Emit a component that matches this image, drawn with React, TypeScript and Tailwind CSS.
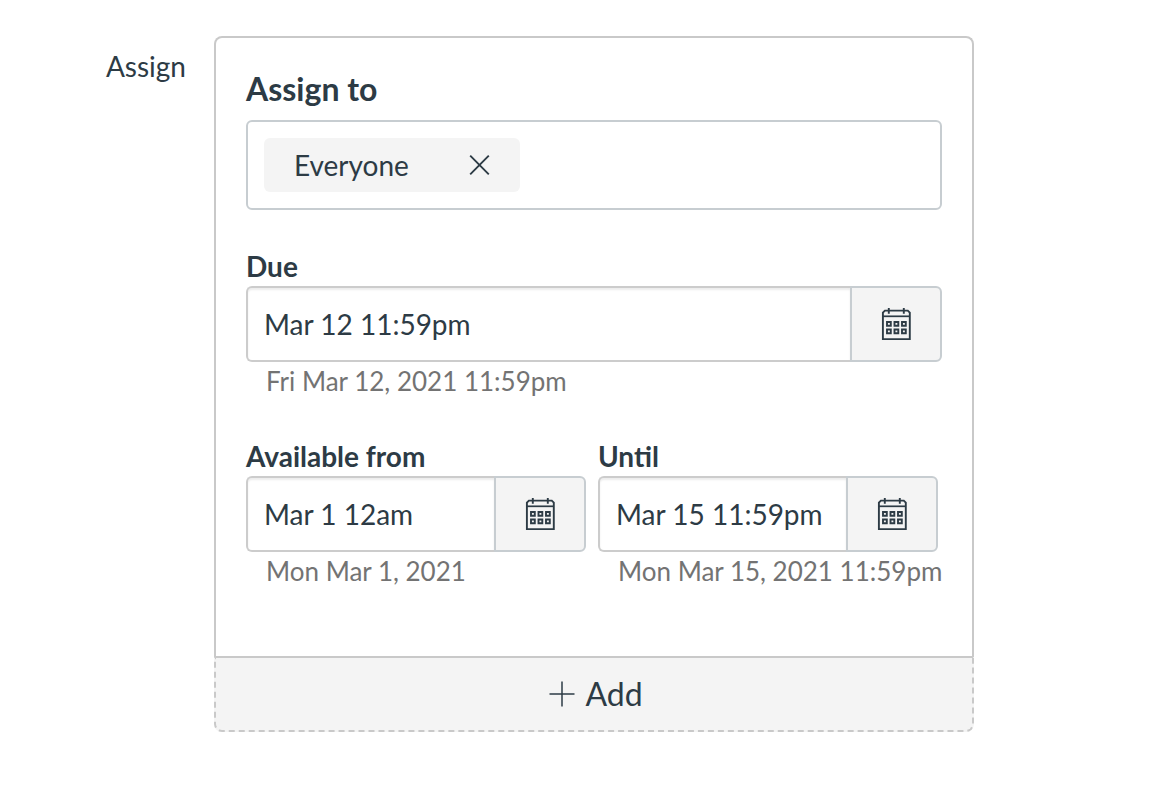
import { useState } from 'react';

function CalendarIcon() {
  return (
    <svg width="30" height="32" viewBox="0 0 30 32" fill="none" stroke="#2D3B45" strokeWidth="1.9" aria-hidden="true">
      <path d="M1.9 31.1V4.6L3.9 2.6H26.8L28.8 4.6V31.1Z" />
      <path d="M1.9 8.3H28.8" strokeWidth="1.7" />
      <path d="M7.8 0V5.8M22.8 0V5.8" />
      <path d="M6 14H9.8V17.8H6ZM13.5 14H17.3V17.8H13.5ZM21 14H24.8V17.8H21Z" />
      <path d="M6 21.5H9.8V25.3H6ZM13.5 21.5H17.3V25.3H13.5ZM21 21.5H24.8V25.3H21Z" />
    </svg>
  );
}

type DateFieldProps = {
  id: string;
  label: string;
  initialValue: string;
  hint: string;
};

function DateField({ id, label, initialValue, hint }: DateFieldProps) {
  const [value, setValue] = useState(initialValue);
  return (
    <div className="min-w-0">
      <label htmlFor={id} className="block pb-0.5 text-[28px] leading-9 font-bold">
        {label}
      </label>
      <div className="flex h-[76px]">
        <input
          id={id}
          type="text"
          value={value}
          onChange={e => setValue(e.target.value)}
          aria-describedby={`${id}-hint`}
          className="min-w-0 flex-1 rounded-l-md border-2 border-r-0 border-[#cccccc] bg-white pl-4 text-[28px] shadow-[inset_0_2px_2px_rgba(0,0,0,0.08)] outline-none"
        />
        <button
          type="button"
          aria-label={`${label} calendar`}
          className="flex w-[92px] shrink-0 items-center justify-center rounded-r-md border-2 border-[#c7cdd1] bg-[#f4f4f4]"
        >
          <CalendarIcon />
        </button>
      </div>
      <p id={`${id}-hint`} className="pl-5 text-[26px] leading-[38px] whitespace-nowrap text-[#737373]">
        {hint}
      </p>
    </div>
  );
}

export default function App() {
  return (
    <main className="flex bg-white pt-9 pb-16 font-['Lato',sans-serif] text-[#2D3B45]">
      <div className="w-[214px] shrink-0 pt-3 pr-7 text-right text-[28px] leading-9">Assign</div>
      <div className="mr-[182px] min-w-0 flex-1">
        <section className="rounded-t-lg border-2 border-b-0 border-[#c9c9c9] px-[30px] pt-[30px] pb-[66px]">
          <h2 className="pb-[10px] text-[32px] leading-[42px] font-bold">Assign to</h2>
          <div className="flex rounded-md border-2 border-[#c7cdd1] p-4">
            <div className="flex h-[54px] w-64 items-center justify-between rounded-md bg-[#f4f4f4] px-[30px] text-[28px]">
              <span>Everyone</span>
              <button type="button" aria-label="Remove Everyone">
                <svg width="21" height="22" viewBox="0 0 21 22" stroke="#2D3B45" strokeWidth="1.9" aria-hidden="true">
                  <path d="M1.2 1.7L19.8 20.3M19.8 1.7L1.2 20.3" />
                </svg>
              </button>
            </div>
          </div>
          <div className="pt-[38px]">
            <DateField id="due" label="Due" initialValue="Mar 12 11:59pm" hint="Fri Mar 12, 2021 11:59pm" />
          </div>
          <div className="grid grid-cols-2 gap-3 pt-[38px] pr-1">
            <DateField id="from" label="Available from" initialValue="Mar 1 12am" hint="Mon Mar 1, 2021" />
            <DateField id="until" label="Until" initialValue="Mar 15 11:59pm" hint="Mon Mar 15, 2021 11:59pm" />
          </div>
        </section>
        <button
          type="button"
          className="flex h-[76px] w-full items-center justify-center gap-[10px] rounded-b-lg border-2 border-dashed border-[#c9c9c9] bg-[#f4f4f4] pl-1 text-[32px] [border-top-style:solid]"
        >
          <svg width="26" height="26" viewBox="0 0 26 26" stroke="#2D3B45" strokeWidth="1.5" aria-hidden="true">
            <path d="M13 0.5V25.5M0.5 13H25.5" />
          </svg>
          Add
        </button>
      </div>
    </main>
  );
}
